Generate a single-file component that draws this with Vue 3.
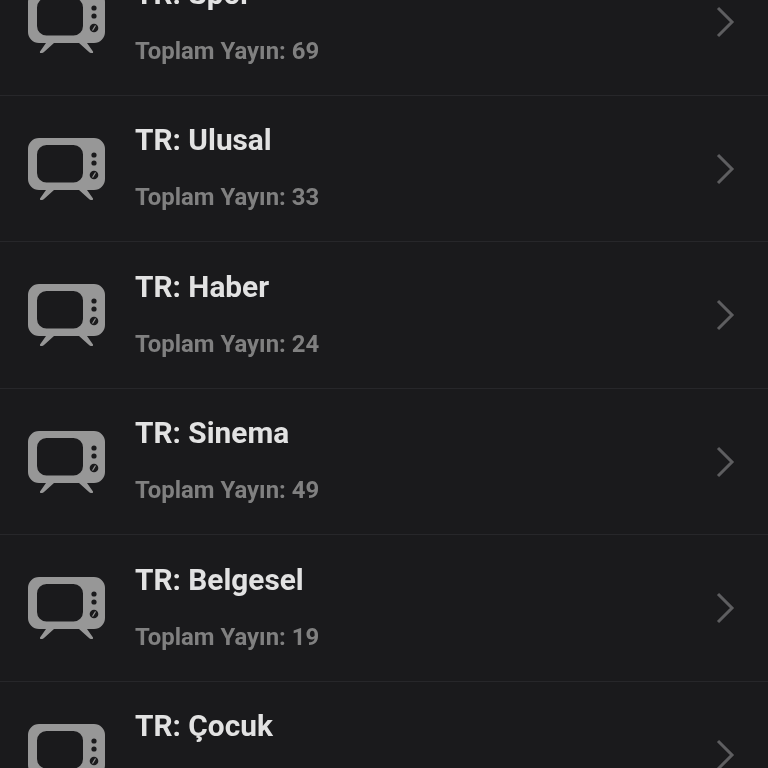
<script setup>
const rows = [
  { name: 'TR: Spor', count: 69 },
  { name: 'TR: Ulusal', count: 33 },
  { name: 'TR: Haber', count: 24 },
  { name: 'TR: Sinema', count: 49 },
  { name: 'TR: Belgesel', count: 19 },
  { name: 'TR: Çocuk', count: 27 }
]
</script>

<template>
  <div class="page">
    <ul class="list">
      <li v-for="r in rows" :key="r.name" class="row">
        <svg class="tv" width="79" height="64" viewBox="0 0 79 64">
          <path fill="#979797" fill-rule="evenodd" d="M12 0H67A11 11 0 0 1 78 11V41A11 11 0 0 1 67 52H60L66 60.500Q66.500 62 65 62L64 62Q63 62 62 61L52 52H27L17 61Q16 62 15 62L14 62Q12.500 62 13 60.500L19 52H12A11 11 0 0 1 1 41V11A11 11 0 0 1 12 0ZM19.500 7A9.500 9.500 0 0 0 10 16.500V35A9.500 9.500 0 0 0 19.500 44.500H46.500A9.500 9.500 0 0 0 56 35V16.500A9.500 9.500 0 0 0 46.500 7Z"/>
          <circle cx="67" cy="17" r="2.600" fill="#1a1a1c"/>
          <circle cx="67" cy="25" r="2.600" fill="#1a1a1c"/>
          <circle cx="67" cy="37" r="4.300" fill="#1a1a1c"/>
          <path d="M65.500 39.500L68.500 34.500" stroke="#979797" stroke-width="1.200"/>
        </svg>
        <div class="text">
          <div class="title">{{ r.name }}</div>
          <div class="sub">Toplam Yayın: {{ r.count }}</div>
        </div>
        <svg class="chev" width="20" height="32" viewBox="0 0 20 32">
          <path d="M2 2L16 16L2 30" fill="none" stroke="#5e5e60" stroke-width="3"/>
        </svg>
      </li>
    </ul>
  </div>
</template>

<style>
html, body { margin: 0; background: #1a1a1c; }
</style>

<style scoped>
.page {
  height: 768px;
  overflow: hidden;
  background: #1a1a1c;
  font-family: Roboto, "Liberation Sans", sans-serif;
  filter: blur(0.5px);
}
.list {
  list-style: none;
  margin: -50.600px 0 0;
  padding: 0;
}
.row {
  box-sizing: border-box;
  height: 146.500px;
  border-bottom: 1px solid #27272a;
  display: flex;
  align-items: flex-start;
  padding-left: 27px;
  position: relative;
}
.tv {
  flex: none;
  margin-top: 42px;
}
.text {
  margin-left: 29px;
  margin-top: 25.500px;
}
.title {
  font-size: 29.800px;
  line-height: 38px;
  font-weight: 700;
  color: #e2e2e2;
}
.sub {
  margin-top: 23px;
  font-size: 23.900px;
  line-height: 30px;
  font-weight: 700;
  color: #808080;
}
.chev {
  position: absolute;
  right: 32px;
  top: 57px;
}
</style>
